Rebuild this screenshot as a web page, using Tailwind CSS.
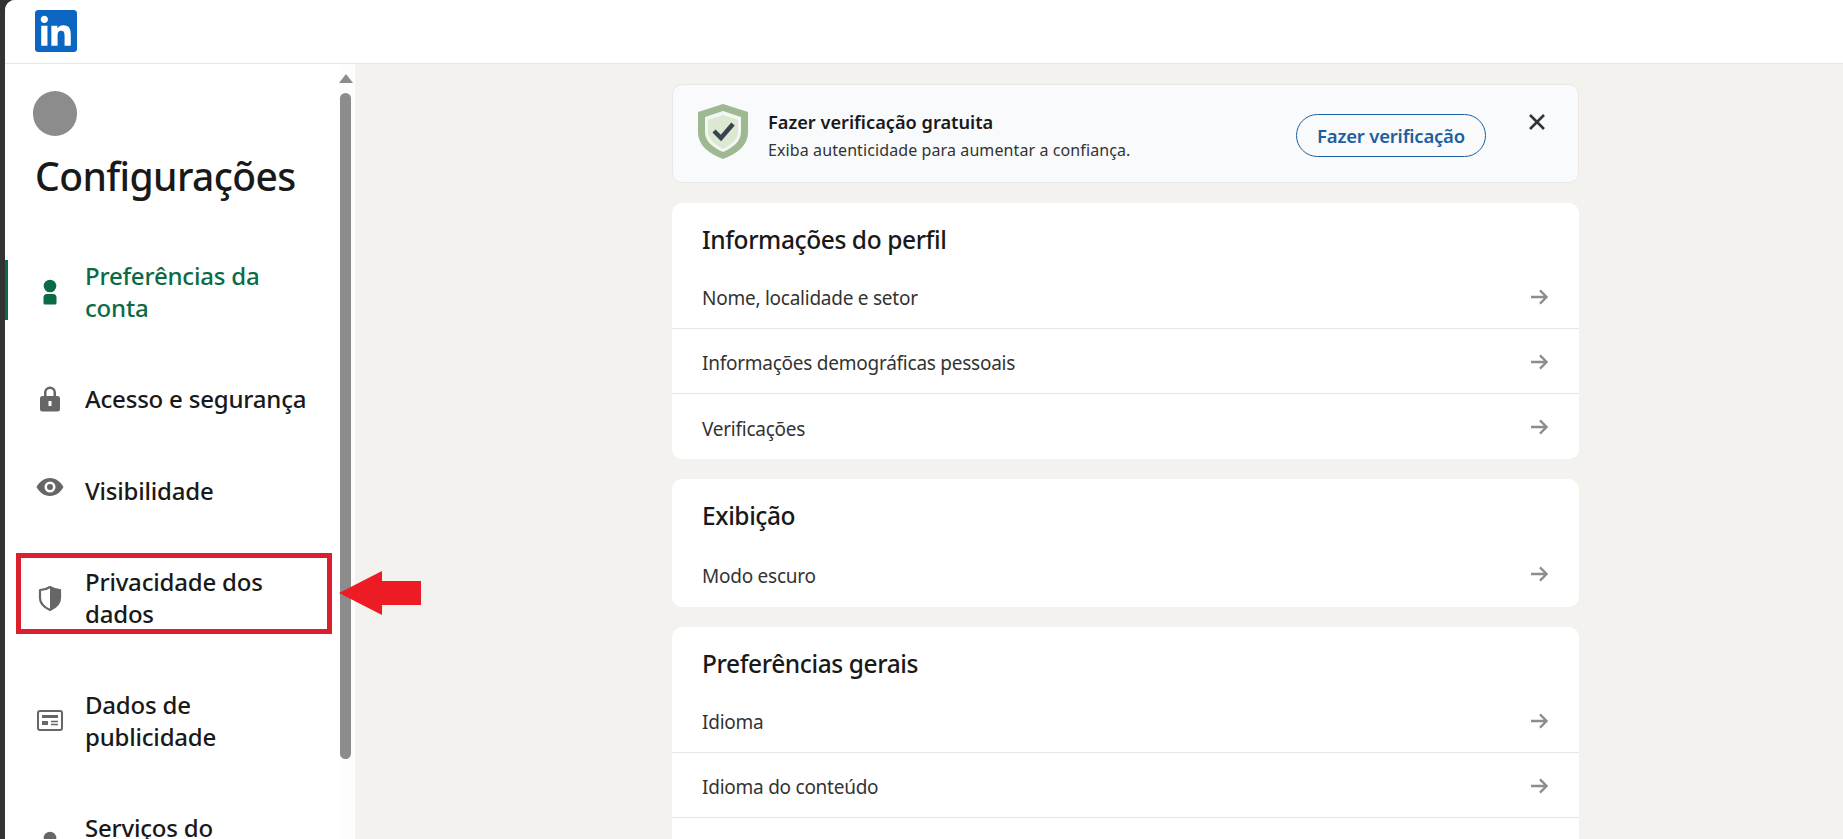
<!DOCTYPE html>
<html lang="pt-BR">
<head>
    <meta charset="UTF-8">
    <meta name="viewport" content="width=device-width, initial-scale=1.0">
    <title>Configurações</title>
    <script src="https://cdn.jsdelivr.net/npm/@tailwindcss/browser@4"></script>
</head>
<body class="bg-[#333333] overflow-hidden font-['Noto_Sans',sans-serif] text-[#191919]">
    <div class="relative ml-[5px] h-[839px] w-[1838px] overflow-hidden rounded-tl-[10px] bg-white">

        <!-- Top bar -->
        <header class="flex h-[64px] items-start border-b border-[#e6e6e6] bg-white pl-[30px] pt-[10px]">
            <svg class="h-[42px] w-[42px]" viewBox="0 0 24 24" fill="#0a66c2"><path d="M20.447 20.452h-3.554v-5.569c0-1.328-.027-3.037-1.852-3.037-1.853 0-2.136 1.445-2.136 2.939v5.667H9.351V9h3.414v1.561h.046c.477-.9 1.637-1.85 3.37-1.85 3.601 0 4.267 2.37 4.267 5.455v6.286zM5.337 7.433c-1.144 0-2.063-.926-2.063-2.065 0-1.138.92-2.063 2.063-2.063 1.14 0 2.064.925 2.064 2.063 0 1.139-.925 2.065-2.064 2.065zm1.782 13.019H3.555V9h3.564v11.452zM22.225 0H1.771C.792 0 0 .774 0 1.729v20.542C0 23.227.792 24 1.771 24h20.451C23.2 24 24 23.227 24 22.271V1.729C24 .774 23.2 0 22.222 0h.003z"/></svg>
        </header>

        <div class="flex h-[775px]">
            <!-- Sidebar -->
            <aside class="flex w-[350px] shrink-0 bg-white">
                <div class="w-[334px] shrink-0">
                    <div class="ml-[28px] mt-[27px] h-[45px] w-[44px] rounded-full bg-[#8c8c8c]"></div>
                    <h1 class="ml-[30px] mt-[15px] text-[39px] leading-[50px] tracking-[-0.6px] font-medium">Configurações</h1>

                    <nav class="mt-[59px] flex flex-col gap-[60px] text-[24px] leading-[31.500px] font-medium tracking-[-0.2px]">
                        <a class="relative flex items-center pl-[33px] text-[#0b6b45]">
                            <span class="absolute left-0 top-0 h-[60px] w-[3px] bg-[#0b6b45]"></span>
                            <svg class="w-[24px] h-[26px] shrink-0" viewBox="0 0 24 26" fill="#0b6b45"><circle cx="12" cy="7" r="6.300"/><path d="M5.500 18.500a3.500 3.500 0 0 1 3.500-3.500h6a3.500 3.500 0 0 1 3.500 3.500V24a1.500 1.500 0 0 1-1.500 1.500H7A1.500 1.500 0 0 1 5.500 24z"/></svg>
                            <span class="ml-[23px]">Preferências da<br>conta</span>
                        </a>
                        <a class="flex items-center pl-[33px]">
                            <svg class="w-[24px] h-[28px] shrink-0" viewBox="0 0 24 28" fill="#666666"><path fill-rule="evenodd" d="M6 11V7.500a6 6 0 0 1 12 0V11h1.500A2.500 2.500 0 0 1 22 13.500v10.500a2.500 2.500 0 0 1-2.500 2.500h-15A2.500 2.500 0 0 1 2 24V13.500A2.500 2.500 0 0 1 4.500 11zm2.500 0h7V7.500a3.500 3.500 0 0 0-7 0zM10.500 16v5h3v-5z"/></svg>
                            <span class="ml-[23px]">Acesso e segurança</span>
                        </a>
                        <a class="flex items-center pl-[33px]">
                            <svg class="w-[28px] h-[20px] -ml-[2px] -mr-[2px] -mt-[6px] shrink-0" viewBox="0 0 28 20" fill="#666666"><path fill-rule="evenodd" d="M14 1c6 0 10.800 4 13.500 9-2.700 5-7.500 9-13.500 9S3.200 15 .5 10C3.200 5 8 1 14 1zm0 3.500a5.500 5.500 0 1 0 0 11 5.500 5.500 0 0 0 0-11zM14 7a3 3 0 1 1 0 6 3 3 0 0 1 0-6z"/></svg>
                            <span class="ml-[23px]">Visibilidade</span>
                        </a>
                        <a class="flex items-center pl-[33px]">
                            <svg class="w-[24px] h-[26px] shrink-0" viewBox="0 0 24 26" fill="none"><path d="M12 2 C15 4 18.500 5 22 5 V13 C22 19 17.500 22.500 12 25 C6.500 22.500 2 19 2 13 V5 C5.500 5 9 4 12 2 Z" stroke="#666666" stroke-width="2.200" stroke-linejoin="round"/><path d="M12 2 C15 4 18.500 5 22 5 V13 C22 19 17.500 22.500 12 25 Z" fill="#666666"/></svg>
                            <span class="ml-[23px]">Privacidade dos<br>dados</span>
                        </a>
                        <a class="flex items-center pl-[33px]">
                            <svg class="w-[26px] h-[21px] -ml-[1px] -mr-[1px] shrink-0" viewBox="0 0 26 21" fill="none"><rect x="1" y="1" width="24" height="19" rx="2" stroke="#666666" stroke-width="2"/><path d="M5 5h16v3H5zM5 11h6v4H5z" fill="#666666"/><path d="M14 11.500h7M14 14.500h7" stroke="#666666" stroke-width="1.600"/></svg>
                            <span class="ml-[23px]">Dados de<br>publicidade</span>
                        </a>
                        <a class="flex items-center pl-[33px]">
                            <svg class="w-[24px] h-[26px] shrink-0" viewBox="0 0 24 26" fill="#666666"><circle cx="12" cy="7" r="6.300"/><path d="M5.500 18.500a3.500 3.500 0 0 1 3.500-3.500h6a3.500 3.500 0 0 1 3.500 3.500V24a1.500 1.500 0 0 1-1.500 1.500H7A1.500 1.500 0 0 1 5.500 24z"/></svg>
                            <span class="ml-[23px]">Serviços do<br>LinkedIn</span>
                        </a>
                    </nav>
                </div>

                <!-- Scrollbar -->
                <div class="flex w-[16px] shrink-0 flex-col items-center bg-[#fdfdfd] pt-[10px] pr-[3px]">
                    <div class="h-0 w-0 border-x-[7px] border-b-[9px] border-x-transparent border-b-[#8c8c8c]"></div>
                    <div class="mt-[10px] h-[666px] w-[11px] rounded-full bg-[#8c8c8c]"></div>
                </div>
            </aside>

            <!-- Main column -->
            <main class="flex-1 bg-[#f3f2ef] pl-[317px] pt-[20px]">
                <div class="flex w-[907px] flex-col gap-[20px]">

                    <div class="relative flex h-[99px] items-center rounded-[10px] border border-[#e8e8e8] bg-[#f8fafc] pl-[25px]">
                        <svg class="h-[55px] w-[50px] shrink-0 -mt-[4px]" viewBox="0 0 50 55">
                            <path d="M25 0 L50 8 V28 C50 42 38 50 25 55 C12 50 0 42 0 28 V8 Z" fill="#9eb991"/>
                            <path d="M25 7 L43 13 V28 C43 38 34 44 25 48 C16 44 7 38 7 28 V13 Z" fill="#f4f7f1"/>
                            <path d="M25 11 L40 16 V28 C40 36 32 41 25 45 C18 41 10 36 10 28 V16 Z" fill="#dce8d2"/>
                            <path d="M16 27 L23 34 L35 20" fill="none" stroke="#38434f" stroke-width="4.500"/>
                        </svg>
                        <div class="ml-[20px] mt-[4px] flex-1">
                            <p class="text-[18.200px] leading-[24px] font-semibold">Fazer verificação gratuita</p>
                            <p class="mt-[4px] text-[16px] leading-[24px] text-[#333333] tracking-[0.1px]">Exiba autenticidade para aumentar a confiança.</p>
                        </div>
                        <button class="mt-[4px] h-[43px] w-[190px] rounded-full border border-[#1d5f9f] text-[18.500px] font-semibold tracking-[-0.2px] text-[#1d5f9f]">Fazer verificação</button>
                        <svg class="ml-[43px] mr-[33px] -mt-[24px] h-[16px] w-[16px] shrink-0" viewBox="0 0 16 16" stroke="#333333" stroke-width="2.600"><path d="M1 1l14 14M15 1L1 15"/></svg>
                    </div>

                    <section class="overflow-hidden rounded-[10px] bg-white">
                        <h2 class="pl-[30px] pt-[19px] h-[61px] text-[24.500px] leading-[36px] font-medium tracking-[-0.4px]">Informações do perfil</h2>
                        <a class="flex h-[65px] items-center justify-between border-b border-[#e6e6e6] pl-[30px] pr-[31px] text-[19px] tracking-[-0.25px] text-[#333333]">
                            <span class="mt-[5px]">Nome, localidade e setor</span>
                            <svg class="mt-[1px] h-[16px] w-[17px]" viewBox="0 0 18 16" fill="none" stroke="#8c8c8c" stroke-width="2.400"><path d="M0 8h16M9.500 1l7 7-7 7"/></svg>
                        </a>
                        <a class="flex h-[65px] items-center justify-between border-b border-[#e6e6e6] pl-[30px] pr-[31px] text-[19px] tracking-[-0.25px] text-[#333333]">
                            <span class="mt-[5px]">Informações demográficas pessoais</span>
                            <svg class="mt-[1px] h-[16px] w-[17px]" viewBox="0 0 18 16" fill="none" stroke="#8c8c8c" stroke-width="2.400"><path d="M0 8h16M9.500 1l7 7-7 7"/></svg>
                        </a>
                        <a class="flex h-[65px] items-center justify-between pl-[30px] pr-[31px] text-[19px] tracking-[-0.25px] text-[#333333]">
                            <span class="mt-[5px]">Verificações</span>
                            <svg class="mt-[1px] h-[16px] w-[17px]" viewBox="0 0 18 16" fill="none" stroke="#8c8c8c" stroke-width="2.400"><path d="M0 8h16M9.500 1l7 7-7 7"/></svg>
                        </a>
                    </section>

                    <section class="overflow-hidden rounded-[10px] bg-white">
                        <h2 class="pl-[30px] pt-[19px] h-[61px] text-[24.500px] leading-[36px] font-medium tracking-[-0.4px]">Exibição</h2>
                        <a class="flex h-[67px] items-center justify-between pl-[30px] pr-[31px] text-[19px] tracking-[-0.25px] text-[#333333]">
                            <span class="mt-[5px]">Modo escuro</span>
                            <svg class="mt-[1px] h-[16px] w-[17px]" viewBox="0 0 18 16" fill="none" stroke="#8c8c8c" stroke-width="2.400"><path d="M0 8h16M9.500 1l7 7-7 7"/></svg>
                        </a>
                    </section>

                    <section class="overflow-hidden rounded-[10px] bg-white">
                        <h2 class="pl-[30px] pt-[19px] h-[61px] text-[24.500px] leading-[36px] font-medium tracking-[-0.4px]">Preferências gerais</h2>
                        <a class="flex h-[65px] items-center justify-between border-b border-[#e6e6e6] pl-[30px] pr-[31px] text-[19px] tracking-[-0.25px] text-[#333333]">
                            <span class="mt-[5px]">Idioma</span>
                            <svg class="mt-[1px] h-[16px] w-[17px]" viewBox="0 0 18 16" fill="none" stroke="#8c8c8c" stroke-width="2.400"><path d="M0 8h16M9.500 1l7 7-7 7"/></svg>
                        </a>
                        <a class="flex h-[65px] items-center justify-between border-b border-[#e6e6e6] pl-[30px] pr-[31px] text-[19px] tracking-[-0.25px] text-[#333333]">
                            <span class="mt-[5px]">Idioma do conteúdo</span>
                            <svg class="mt-[1px] h-[16px] w-[17px]" viewBox="0 0 18 16" fill="none" stroke="#8c8c8c" stroke-width="2.400"><path d="M0 8h16M9.500 1l7 7-7 7"/></svg>
                        </a>
                        <div class="h-[65px]"></div>
                    </section>
                </div>
            </main>
        </div>

        <!-- Annotation over the sidebar -->
        <div class="absolute left-[11px] top-[553px] h-[81px] w-[316px] border-[5px] border-[#dc1f2e]"></div>
        <svg class="absolute left-[334px] top-[571px] h-[44px] w-[82px]" viewBox="0 0 82 44" fill="#ed1c24"><path d="M0 22 L43 0 V10 H82 V34 H43 V44 Z"/></svg>
    </div>
</body>
</html>
